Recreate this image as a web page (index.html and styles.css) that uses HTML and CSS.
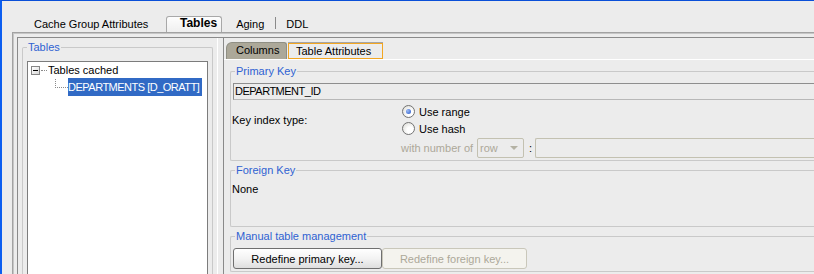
FILE: index.html
```html
<!DOCTYPE html>
<html lang="en">
<head>
    <meta charset="UTF-8">
    <title>Cache Group</title>
    <link rel="stylesheet" href="styles.css">
</head>
<body>
    <div class="toptabs">
        <span class="ttab first">Cache Group Attributes</span>
        <span class="ttab sel">Tables</span>
        <span class="ttab aging">Aging</span>
        <span class="tsep"></span>
        <span class="ttab ddl">DDL</span>
    </div>

    <div class="frame">
        <div class="inner">
            <div class="leftpane">
                <fieldset class="group tables">
                    <legend>Tables</legend>
                    <div class="tree">
                        <div class="node root">
                            <span class="expander"><span class="minus"></span></span>
                            <span class="hline"></span>
                            <span class="label">Tables cached</span>
                        </div>
                        <div class="node child">
                            <span class="elbow"></span>
                            <span class="label selected">DEPARTMENTS [D_ORATT]</span>
                        </div>
                    </div>
                </fieldset>
            </div>

            <div class="splitter"></div>

            <div class="rightpane">
                <div class="subtabs">
                    <span class="stab columns">Columns</span>
                    <span class="stab active">Table Attributes</span>
                </div>
                <div class="content">
                    <fieldset class="group pk">
                        <legend>Primary Key</legend>
                        <div class="field">DEPARTMENT_ID</div>
                        <div class="keyrow">
                            <span class="keylabel">Key index type:</span>
                            <div class="radios">
                                <div class="option"><span class="radio on"><span class="dot"></span></span>Use range</div>
                                <div class="option"><span class="radio"></span>Use hash</div>
                            </div>
                        </div>
                        <div class="numrow">
                            <span class="numlabel">with number of</span>
                            <span class="select">row<span class="arrow"></span></span>
                            <span class="colon">:</span>
                            <span class="numfield"></span>
                        </div>
                    </fieldset>

                    <fieldset class="group fk">
                        <legend>Foreign Key</legend>
                        <div class="none">None</div>
                    </fieldset>

                    <fieldset class="group manual">
                        <legend>Manual table management</legend>
                        <div class="buttons">
                            <button class="btn primary">Redefine primary key...</button>
                            <button class="btn foreign" disabled>Redefine foreign key...</button>
                        </div>
                    </fieldset>
                </div>
            </div>
        </div>
    </div>
</body>
</html>
```

FILE: styles.css
```css
html {
    height: 100%;
}

body {
    margin: 0;
    height: 100%;
    box-sizing: border-box;
    overflow: hidden;
    display: flex;
    flex-direction: column;
    font-family: "Liberation Sans", Arial, sans-serif;
    font-size: 11px;
    color: #000;
    background-color: #ececec;
    border-top: 1px solid #0a4fd8;
    border-left: 2px solid #0c5ef0;
    white-space: nowrap;
}

/* top tabs */
.toptabs {
    height: 31px;
    flex: none;
    display: flex;
    align-items: flex-end;
    padding-left: 32px;
}

.ttab {
    line-height: 13px;
    margin-bottom: 1px;
}

.ttab.first {
    width: 115px;
    margin-right: 17px;
}

.ttab.sel {
    height: 16px;
    box-sizing: border-box;
    margin-bottom: 0;
    padding: 0 4px 0 13px;
    border: 1px solid #a8a8a8;
    border-bottom: none;
    border-radius: 3px 3px 0 0;
    background: linear-gradient(#fdfdfd, #efefef);
    font-size: 12px;
    font-weight: bold;
    line-height: 13px;
}

.ttab.aging {
    margin-left: 14px;
}

.tsep {
    width: 1px;
    height: 12px;
    margin: 0 0 3px 11px;
    background-color: #8a8a8a;
}

.ttab.ddl {
    margin-left: 10px;
}

/* frame */
.frame {
    flex: 1;
    margin-left: 10px;
    padding: 4px 0 0 4px;
    border-top: 1px solid #a2a2a2;
    border-left: 1px solid #a2a2a2;
    box-shadow: inset 1px 1px 0 #c6c6c6;
    display: flex;
    min-height: 0;
}

.inner {
    flex: 1;
    display: flex;
    border-top: 1px solid #8a8a8a;
    border-left: 1px solid #8a8a8a;
}

/* group boxes */
.group {
    margin: 0;
    padding: 0 4px 4px 4px;
    border: 1px solid #c9c9c9;
    border-radius: 2px;
    min-width: 0;
}

.group legend {
    padding: 0 1px;
    color: #2f62d2;
    line-height: 13px;
}

/* left pane */
.leftpane {
    width: 199px;
    flex: none;
    box-sizing: border-box;
    padding: 3px 4px 0 4px;
}

.tables {
    height: 233px;
    box-sizing: border-box;
    padding-bottom: 0;
    border-bottom: none;
    border-radius: 2px 2px 0 0;
}

.tree {
    margin-top: 7px;
    height: 213px;
    box-sizing: border-box;
    background-color: #fff;
    border: 1px solid #7c7c7c;
    border-bottom: none;
    padding-left: 3px;
    overflow: hidden;
}

.node {
    display: flex;
    align-items: center;
}

.node.root {
    height: 16px;
}

.expander {
    width: 9px;
    height: 9px;
    flex: none;
    box-sizing: border-box;
    border: 1px solid #858585;
    background: linear-gradient(135deg, #fff, #d8d8d8);
    display: flex;
    align-items: center;
    justify-content: center;
}

.minus {
    width: 5px;
    height: 1px;
    background-color: #000;
}

.hline {
    width: 6px;
    flex: none;
    border-top: 1px dotted #8a8a8a;
    margin: 0 1px 0 1px;
}

.label {
    line-height: 14px;
}

.node.child {
    align-items: flex-start;
    margin-left: 24px;
}

.elbow {
    width: 12px;
    height: 8px;
    flex: none;
    margin-top: 1px;
    border-left: 1px dotted #8a8a8a;
    border-bottom: 1px dotted #8a8a8a;
}

.label.selected {
    background-color: #316ac5;
    color: #fff;
    line-height: 18px;
    padding-right: 3px;
    letter-spacing: -0.5px;
}

/* splitter */
.splitter {
    width: 6px;
    flex: none;
    box-sizing: border-box;
    border-left: 1px solid #fff;
    background-color: #ececec;
}

/* right pane */
.rightpane {
    flex: 1;
    min-width: 0;
    border-left: 1px solid #8a8a8a;
    padding-top: 4px;
    display: flex;
    flex-direction: column;
}

.subtabs {
    display: flex;
    height: 17px;
    padding-left: 2px;
}

.stab {
    box-sizing: border-box;
    line-height: 15px;
}

.stab.columns {
    width: 61px;
    height: 17px;
    padding-left: 9px;
    border: 1px solid #8f8f84;
    border-bottom: none;
    border-radius: 6px 3px 0 0;
    background-color: #aca899;
}

.stab.active {
    width: 95px;
    height: 16px;
    margin: 1px 0 0 1px;
    padding-left: 7px;
    line-height: 14px;
    border: 1px solid #f2a622;
    box-shadow: 0 -1px 0 #a6a6a6;
}

.content {
    flex: 1;
    border-top: 1px solid #fff;
    padding: 5px 0 0 6px;
}

.pk,
.fk,
.manual {
    border-right: none;
    border-radius: 2px 0 0 2px;
    padding: 0 0 2px 2px;
}

.pk legend,
.fk legend,
.manual legend {
    margin-left: 2px;
}

.field {
    margin-top: 5px;
    height: 17px;
    box-sizing: border-box;
    padding-left: 1px;
    line-height: 15px;
    letter-spacing: -0.5px;
    border: 1px solid #b8b8b8;
    border-top-color: #8e8e8e;
    border-left-color: #8e8e8e;
    border-right: none;
}

.keyrow {
    display: flex;
    align-items: center;
    margin-top: 3px;
}

.keylabel {
    width: 170px;
    margin-left: -1px;
}

.option {
    display: flex;
    align-items: center;
    height: 17px;
}

.radio {
    width: 13px;
    height: 13px;
    box-sizing: border-box;
    margin-right: 4px;
    border-radius: 50%;
    border: 1px solid #737373;
    background: radial-gradient(circle at 65% 65%, #fff 30%, #d6d6d0 100%);
    display: flex;
    align-items: center;
    justify-content: center;
}

.dot {
    width: 5px;
    height: 5px;
    border-radius: 50%;
    background: radial-gradient(circle at 35% 35%, #9dbcf5, #2455c8);
}

.numrow {
    display: flex;
    align-items: center;
    height: 20px;
    margin: 1px 0 0 168px;
    color: #aca899;
}

.numlabel {
    width: 76px;
}

.select {
    width: 47px;
    height: 20px;
    box-sizing: border-box;
    padding: 0 5px 0 2px;
    border: 1px solid #c3c1b1;
    border-radius: 2px;
    line-height: 18px;
    display: flex;
    justify-content: space-between;
    align-items: center;
}

.arrow {
    width: 0;
    height: 0;
    border-left: 4px solid transparent;
    border-right: 4px solid transparent;
    border-top: 4px solid #b4b2a4;
}

.colon {
    margin: 0 3px 0 5px;
    color: #000;
}

.numfield {
    flex: 1;
    height: 20px;
    box-sizing: border-box;
    border: 1px solid #c3c1b1;
    border-right: none;
    border-radius: 2px 0 0 2px;
}

.fk {
    margin-top: 3px;
    padding-bottom: 30px;
}

.none {
    margin: 6px 0 0 -1px;
    line-height: 13px;
}

.manual {
    margin-top: 3px;
}

.buttons {
    display: flex;
    margin-top: 5px;
}

.btn {
    height: 21px;
    padding: 0;
    font-family: "Liberation Sans", Arial, sans-serif;
    font-size: 11px;
    border-radius: 3px;
    color: #000;
    border: 1px solid #6f6f6f;
    background: linear-gradient(#fff, #f3f3f3 50%, #dedede);
}

.btn.primary {
    width: 149px;
}

.btn.foreign {
    width: 145px;
    color: #aca899;
    border-color: #c9c7ba;
    background: #f4f3ee;
}
```
